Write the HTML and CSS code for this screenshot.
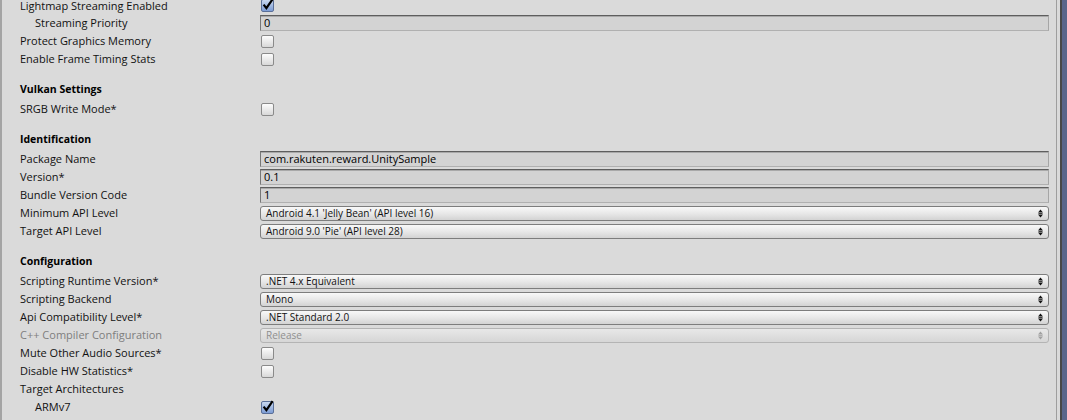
FILE: index.html
```html
<!DOCTYPE html>
<html>
<head>
<meta charset="utf-8">
<link rel="stylesheet" href="styles.css">
</head>
<body>
<div class="window">
  <div class="inspector">
    <div class="content">
      <div class="list">
        <div class="row first"><span class="label">Lightmap Streaming Enabled</span><span class="value"><span class="check on"><svg width="14" height="14" viewBox="0 0 14 14"><path d="M2.6 6.6 L5.4 10.2 L11.6 1.2" fill="none" stroke="#000" stroke-width="2.2" stroke-linejoin="miter"/></svg></span></span></div>
        <div class="row"><span class="label indent">Streaming Priority</span><span class="value"><span class="field">0</span></span></div>
        <div class="row"><span class="label">Protect Graphics Memory</span><span class="value"><span class="check"></span></span></div>
        <div class="row"><span class="label">Enable Frame Timing Stats</span><span class="value"><span class="check"></span></span></div>

        <div class="head">Vulkan Settings</div>
        <div class="row"><span class="label">SRGB Write Mode*</span><span class="value"><span class="check"></span></span></div>

        <div class="head">Identification</div>
        <div class="row"><span class="label">Package Name</span><span class="value"><span class="field">com.rakuten.reward.UnitySample</span></span></div>
        <div class="row"><span class="label">Version*</span><span class="value"><span class="field">0.1</span></span></div>
        <div class="row"><span class="label">Bundle Version Code</span><span class="value"><span class="field">1</span></span></div>
        <div class="row"><span class="label">Minimum API Level</span><span class="value"><span class="popup"><span class="popup-text">Android 4.1 'Jelly Bean' (API level 16)</span><svg class="arrows" width="5" height="9" viewBox="0 0 5 9"><path d="M0 3.6 L2.5 0.4 L5 3.6 Z M0 5.4 L2.5 8.6 L5 5.4 Z" fill="#111"/><rect x="0.5" y="4.1" width="4" height="0.8" fill="#111"/></svg></span></span></div>
        <div class="row"><span class="label">Target API Level</span><span class="value"><span class="popup"><span class="popup-text">Android 9.0 'Pie' (API level 28)</span><svg class="arrows" width="5" height="9" viewBox="0 0 5 9"><path d="M0 3.6 L2.5 0.4 L5 3.6 Z M0 5.4 L2.5 8.6 L5 5.4 Z" fill="#111"/><rect x="0.5" y="4.1" width="4" height="0.8" fill="#111"/></svg></span></span></div>

        <div class="head">Configuration</div>
        <div class="row"><span class="label">Scripting Runtime Version*</span><span class="value"><span class="popup"><span class="popup-text">.NET 4.x Equivalent</span><svg class="arrows" width="5" height="9" viewBox="0 0 5 9"><path d="M0 3.6 L2.5 0.4 L5 3.6 Z M0 5.4 L2.5 8.6 L5 5.4 Z" fill="#111"/><rect x="0.5" y="4.1" width="4" height="0.8" fill="#111"/></svg></span></span></div>
        <div class="row"><span class="label">Scripting Backend</span><span class="value"><span class="popup"><span class="popup-text">Mono</span><svg class="arrows" width="5" height="9" viewBox="0 0 5 9"><path d="M0 3.6 L2.5 0.4 L5 3.6 Z M0 5.4 L2.5 8.6 L5 5.4 Z" fill="#111"/><rect x="0.5" y="4.1" width="4" height="0.8" fill="#111"/></svg></span></span></div>
        <div class="row"><span class="label">Api Compatibility Level*</span><span class="value"><span class="popup"><span class="popup-text">.NET Standard 2.0</span><svg class="arrows" width="5" height="9" viewBox="0 0 5 9"><path d="M0 3.6 L2.5 0.4 L5 3.6 Z M0 5.4 L2.5 8.6 L5 5.4 Z" fill="#111"/><rect x="0.5" y="4.1" width="4" height="0.8" fill="#111"/></svg></span></span></div>
        <div class="row"><span class="label disabled">C++ Compiler Configuration</span><span class="value"><span class="popup off"><span class="popup-text">Release</span><svg class="arrows" width="5" height="9" viewBox="0 0 5 9"><path d="M0 3.6 L2.5 0.4 L5 3.6 Z M0 5.4 L2.5 8.6 L5 5.4 Z" fill="#a0a0a0"/><rect x="0.5" y="4.1" width="4" height="0.8" fill="#a0a0a0"/></svg></span></span></div>
        <div class="row"><span class="label">Mute Other Audio Sources*</span><span class="value"><span class="check"></span></span></div>
        <div class="row"><span class="label">Disable HW Statistics*</span><span class="value"><span class="check"></span></span></div>
        <div class="row"><span class="label">Target Architectures</span><span class="value"></span></div>
        <div class="row"><span class="label indent">ARMv7</span><span class="value"><span class="check on"><svg width="14" height="14" viewBox="0 0 14 14"><path d="M2.6 6.6 L5.4 10.2 L11.6 1.2" fill="none" stroke="#000" stroke-width="2.2" stroke-linejoin="miter"/></svg></span></span></div>
        <div class="row"><span class="label indent"></span><span class="value"><span class="check"></span></span></div>
      </div>
    </div>
    <div class="gutter"></div>
  </div>
  <div class="frame"></div>
  <div class="desk"></div>
</div>
</body>
</html>
```

FILE: styles.css
```css
html, body {
  margin: 0;
  padding: 0;
}

body {
  height: 420px;
  overflow: hidden;
  background: #dadada;
  font-family: "Open Sans", "DejaVu Sans", sans-serif;
  font-size: 11px;
  color: #111;
}

.window {
  display: flex;
  height: 420px;
}

.inspector {
  flex: 1;
  display: flex;
  background: #dadada;
  border-left: 2px solid #a4a4a4;
}

.content {
  flex: 1;
  min-width: 0;
  overflow: hidden;
  border-right: 1px solid #9e9e9e;
  padding: 0 7px 0 18px;
}

.gutter {
  width: 3px;
}

.frame {
  width: 2px;
  background: #474747;
}

.desk {
  width: 5px;
  background: #59658a;
}

.row {
  display: grid;
  grid-template-columns: 240px 1fr;
  height: 18px;
  align-items: center;
}

.row.first {
  height: 14px;
  align-items: start;
}

.row.first .label {
  line-height: 11px;
}

.row.first .check {
  margin-top: -1px;
}

.label {
  white-space: nowrap;
  line-height: 18px;
}

.indent {
  padding-left: 15px;
}

.disabled {
  color: #7e7e7e;
}

.head {
  height: 22px;
  line-height: 22px;
  margin-top: 10px;
  font-weight: 700;
  font-size: 10.5px;
  color: #000;
}

.value {
  display: flex;
  align-items: center;
  min-width: 0;
}

.field {
  flex: 1;
  height: 16px;
  box-sizing: border-box;
  background: #d3d3d3;
  border: 1px solid;
  border-color: #5e5e5e #a6a6a6 #b0b0b0 #777777;
  box-shadow: inset 0 1px 0 #a9a9a9;
  padding: 0 3px;
  line-height: 14px;
  color: #000;
  white-space: nowrap;
  overflow: hidden;
}

.popup {
  flex: 1;
  height: 15px;
  box-sizing: border-box;
  display: flex;
  align-items: center;
  justify-content: space-between;
  border: 1px solid #7d7d7d;
  border-radius: 3px;
  background: linear-gradient(#f8f8f8, #e6e6e6 55%, #d3d3d3);
  padding: 0 5px 0 5px;
  font-size: 10px;
  color: #111;
}

.popup-text {
  white-space: nowrap;
  line-height: 13px;
}

.popup.off {
  border-color: #b4b4b4;
  background: linear-gradient(#e8e8e8, #dedede 55%, #d6d6d6);
  color: #8f8f8f;
}

.arrows {
  display: block;
  flex: none;
}

.check {
  display: block;
  position: relative;
  width: 13px;
  height: 13px;
  box-sizing: border-box;
  margin-left: 1px;
  border: 1px solid #8a8a8a;
  border-radius: 2px;
  background: linear-gradient(#fdfdfd, #d8d8d8);
}

.check.on {
  border-color: #5a6f98;
  background: linear-gradient(#c9d8ef, #7c9cd4);
}

.check svg {
  position: absolute;
  left: -1px;
  top: -2px;
}
```
